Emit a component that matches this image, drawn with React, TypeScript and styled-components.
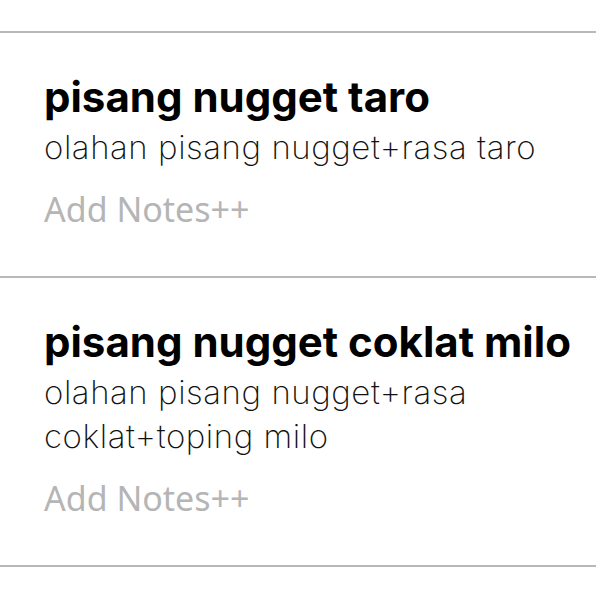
import styled, { createGlobalStyle } from 'styled-components'

interface MenuItem {
  name: string
  description: string
}

const items: MenuItem[] = [
  { name: 'pisang nugget taro', description: 'olahan pisang nugget+rasa taro' },
  { name: 'pisang nugget coklat milo', description: 'olahan pisang nugget+rasa coklat+toping milo' },
]

function App() {
  return (
    <>
      <GlobalStyle />
      <List>
        {items.map(item => (
          <ItemRow key={item.name}>
            <ItemName>{item.name}</ItemName>
            <ItemDescription>{item.description}</ItemDescription>
            <AddNotes>Add Notes++</AddNotes>
          </ItemRow>
        ))}
      </List>
    </>
  )
}

export default App

const GlobalStyle = createGlobalStyle`
  body {
    margin: 0;
    background: #fff;
    font-family: Inter, "Noto Sans", sans-serif;
  }
`

const List = styled.div`
  padding-top: 31px;
  width: 596px;
`

const ItemRow = styled.div`
  border-top: 2px solid #b8b8b8;
  padding: 40px 20px 45px 44px;

  &:last-child {
    border-bottom: 2px solid #b8b8b8;
  }
`

const ItemName = styled.div`
  font-size: 42px;
  line-height: 48px;
  font-weight: 700;
  color: #000;
`

const ItemDescription = styled.div`
  margin-top: 4px;
  font-size: 33px;
  line-height: 44px;
  font-weight: 200;
  letter-spacing: 0.55px;
  color: #111;
`

const AddNotes = styled.div`
  margin-top: 18px;
  font-family: "Noto Sans", sans-serif;
  font-size: 34px;
  line-height: 44px;
  color: #b5b5b5;
`
